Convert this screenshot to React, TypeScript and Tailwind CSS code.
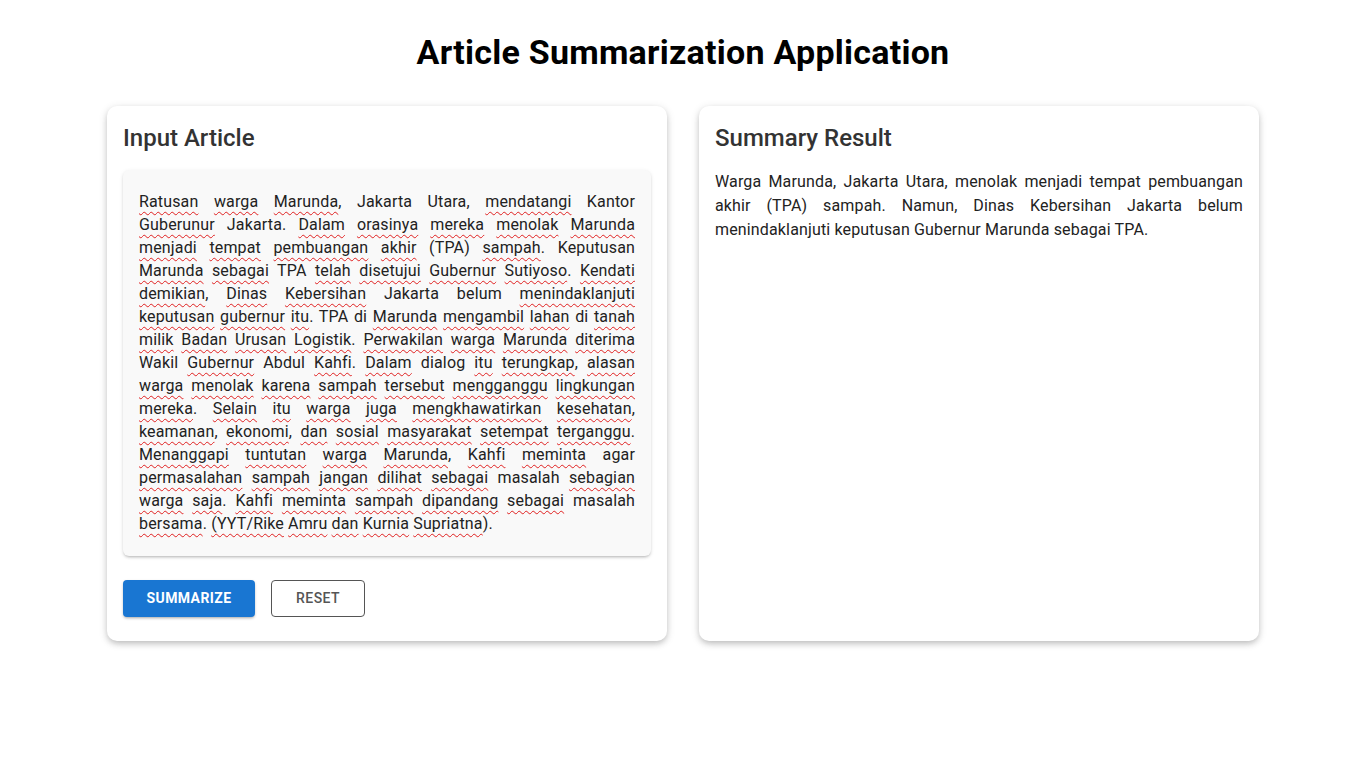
import React from "react";

const lines: string[] = [
  "*Ratusan *warga *Marunda, Jakarta Utara, *mendatangi Kantor",
  "*Guberunur Jakarta. *Dalam *orasinya *mereka *menolak *Marunda",
  "*menjadi *tempat *pembuangan *akhir (TPA) *sampah. Keputusan",
  "*Marunda *sebagai TPA *telah *disetujui *Gubernur *Sutiyoso. *Kendati",
  "*demikian, *Dinas *Kebersihan Jakarta belum *menindaklanjuti",
  "*keputusan *gubernur *itu. TPA di *Marunda *mengambil *lahan di *tanah",
  "*milik *Badan *Urusan *Logistik. *Perwakilan *warga *Marunda *diterima",
  "Wakil *Gubernur Abdul *Kahfi. *Dalam dialog *itu *terungkap, *alasan",
  "*warga *menolak *karena *sampah *tersebut *mengganggu *lingkungan",
  "*mereka. *Selain *itu *warga *juga *mengkhawatirkan *kesehatan,",
  "*keamanan, *ekonomi, *dan *sosial *masyarakat *setempat *terganggu.",
  "*Menanggapi *tuntutan *warga *Marunda, *Kahfi *meminta agar",
  "*permasalahan *sampah *jangan *dilihat *sebagai masalah *sebagian",
  "*warga *saja. *Kahfi *meminta *sampah *dipandang *sebagai masalah",
  "*bersama. *(YYT/Rike *Amru *dan *Kurnia *Supriatna).",
];

function Token({ t }: { t: string }) {
  if (!t.startsWith("*")) return <>{t}</>;
  const w = t.slice(1);
  const m = w.match(/^(.*?)([.,)]*)$/);
  const word = m ? m[1] : w;
  const punct = m ? m[2] : "";
  return (
    <>
      <span className="underline decoration-wavy decoration-[#e02020] decoration-1 underline-offset-[4px] [text-decoration-skip-ink:none]">
        {word}
      </span>
      {punct}
    </>
  );
}

function Line({ s, last }: { s: string; last: boolean }) {
  const toks = s.split(" ");
  return (
    <div
      className={
        last
          ? "text-left"
          : "text-justify [text-align-last:justify]"
      }
    >
      {toks.map((t, i) => (
        <React.Fragment key={i}>
          <Token t={t} />
          {i < toks.length - 1 ? " " : null}
        </React.Fragment>
      ))}
    </div>
  );
}

export default function App() {
  return (
    <div
      className="min-h-screen bg-white pt-8"
      style={{ fontFamily: "Roboto, 'Noto Sans', sans-serif" }}
    >
      <h1 className="text-center text-[34px] font-bold leading-[40px] tracking-[0.25px] text-black mb-[34px]">
        Article Summarization Application
      </h1>
      <div className="mx-auto w-[1152px] grid grid-cols-2 gap-8">
        <div className="bg-white rounded-[10px] shadow-[0_3px_6px_-1px_rgba(0,0,0,0.2),0_2px_10px_0_rgba(0,0,0,0.12)] p-4 pb-6">
          <h2 className="text-[24px] font-medium leading-[32px] text-[#333] mb-4">
            Input Article
          </h2>
          <div className="bg-[#f9f9f9] rounded-[6px] shadow-[0_2px_3px_-1px_rgba(0,0,0,0.25),0_1px_4px_0_rgba(0,0,0,0.08)] px-4 pt-[20px] pb-[21px] text-[16px] leading-[23px] tracking-[0.15px] text-[#222]">
            {lines.map((l, i) => (
              <Line key={i} s={l} last={i === lines.length - 1} />
            ))}
          </div>
          <div className="mt-6 flex gap-4">
            <button className="h-[37px] w-[132px] rounded-[4px] bg-[#1976d2] text-white text-[14px] font-bold tracking-[0.4px] uppercase shadow-[0_2px_3px_-1px_rgba(0,0,0,0.25),0_1px_3px_0_rgba(0,0,0,0.12)]">
              SUMMARIZE
            </button>
            <button className="h-[37px] w-[94px] rounded-[4px] border border-[#555] bg-white text-[#555] text-[14px] font-medium tracking-[0.4px] uppercase">
              RESET
            </button>
          </div>
        </div>
        <div className="bg-white rounded-[10px] shadow-[0_3px_6px_-1px_rgba(0,0,0,0.2),0_2px_10px_0_rgba(0,0,0,0.12)] p-4">
          <h2 className="text-[24px] font-medium leading-[32px] text-[#333] mb-4">
            Summary Result
          </h2>
          <p className="text-[16px] leading-[24px] tracking-[0.15px] text-[#222] text-justify">
            Warga Marunda, Jakarta Utara, menolak menjadi tempat pembuangan
            akhir (TPA) sampah. Namun, Dinas Kebersihan Jakarta belum
            menindaklanjuti keputusan Gubernur Marunda sebagai TPA.
          </p>
        </div>
      </div>
    </div>
  );
}
